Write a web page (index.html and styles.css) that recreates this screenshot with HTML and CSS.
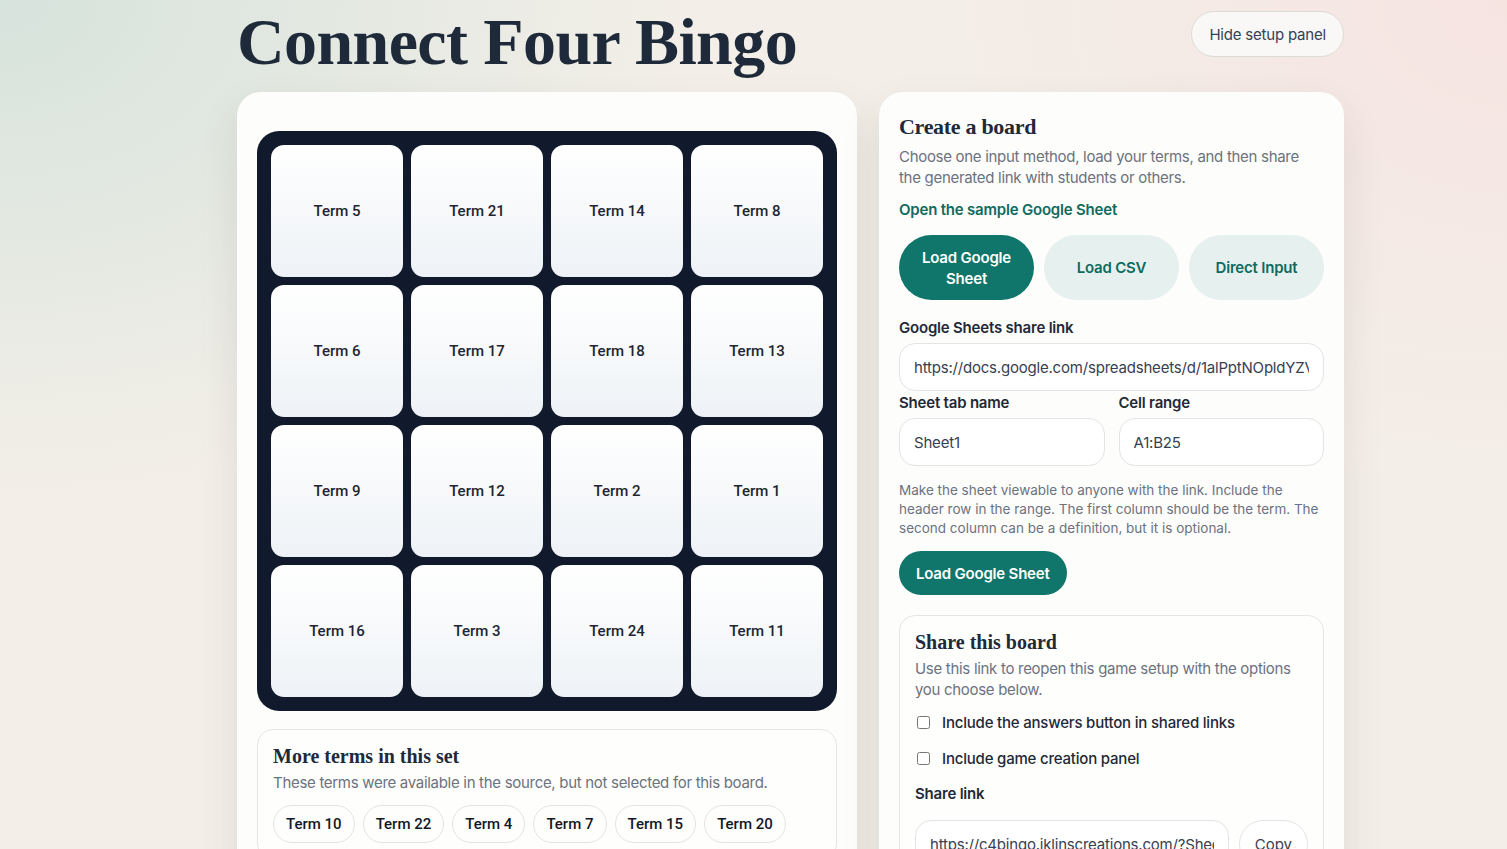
FILE: index.html
```html
<!doctype html>
<html lang="en">
  <head>
    <meta charset="UTF-8" />
    <meta name="viewport" content="width=device-width, initial-scale=1" />
    <title>Connect Four Bingo</title>
    <link rel="stylesheet" href="styles.css">
  </head>
  <body>
    <div class="page">
      <header class="top">
        <h1>Connect Four Bingo</h1>
        <button class="ghost-btn" type="button">Hide setup panel</button>
      </header>

      <main class="layout">
        <section class="card game-card">
          <div class="board">
            <div class="tile">Term 5</div>
            <div class="tile">Term 21</div>
            <div class="tile">Term 14</div>
            <div class="tile">Term 8</div>
            <div class="tile">Term 6</div>
            <div class="tile">Term 17</div>
            <div class="tile">Term 18</div>
            <div class="tile">Term 13</div>
            <div class="tile">Term 9</div>
            <div class="tile">Term 12</div>
            <div class="tile">Term 2</div>
            <div class="tile">Term 1</div>
            <div class="tile">Term 16</div>
            <div class="tile">Term 3</div>
            <div class="tile">Term 24</div>
            <div class="tile">Term 11</div>
          </div>

          <div class="panel extra-terms">
            <h3>More terms in this set</h3>
            <p class="muted">These terms were available in the source, but not selected for this board.</p>
            <div class="chips">
              <span class="chip">Term 10</span>
              <span class="chip">Term 22</span>
              <span class="chip">Term 4</span>
              <span class="chip">Term 7</span>
              <span class="chip">Term 15</span>
              <span class="chip">Term 20</span>
            </div>
          </div>
        </section>

        <aside class="card setup-card">
          <h2>Create a board</h2>
          <p class="muted">Choose one input method, load your terms, and then share the generated link with students or others.</p>
          <a class="sample-link" href="#">Open the sample Google Sheet</a>

          <div class="tabs">
            <button class="tab active" type="button">Load Google Sheet</button>
            <button class="tab" type="button">Load CSV</button>
            <button class="tab" type="button">Direct Input</button>
          </div>

          <label class="field-label" for="sheetUrl">Google Sheets share link</label>
          <input class="field" id="sheetUrl" type="text" value="https://docs.google.com/spreadsheets/d/1alPptNOpldYZVqQ8rT2" />

          <div class="two-col">
            <div>
              <label class="field-label" for="tabName">Sheet tab name</label>
              <input class="field" id="tabName" type="text" value="Sheet1" />
            </div>
            <div>
              <label class="field-label" for="range">Cell range</label>
              <input class="field" id="range" type="text" value="A1:B25" />
            </div>
          </div>

          <p class="hint">Make the sheet viewable to anyone with the link. Include the header row in the range. The first column should be the term. The second column can be a definition, but it is optional.</p>

          <button class="primary-btn" type="button">Load Google Sheet</button>

          <div class="panel share">
            <h3>Share this board</h3>
            <p class="muted">Use this link to reopen this game setup with the options you choose below.</p>
            <label class="check"><input type="checkbox" /> Include the answers button in shared links</label>
            <label class="check"><input type="checkbox" /> Include game creation panel</label>
            <label class="field-label" for="shareLink">Share link</label>
            <div class="share-row">
              <input class="field" id="shareLink" type="text" value="https://c4bingo.iklinscreations.com/?Sheet=1" />
              <button class="copy-btn" type="button">Copy</button>
            </div>
          </div>
        </aside>
      </main>
    </div>
  </body>
</html>
```

FILE: styles.css
```css
* {
  box-sizing: border-box;
}
html,
body {
  margin: 0;
  height: 100%;
  overflow: hidden;
}
body {
  font-family: Inter, "Noto Sans", sans-serif;
  letter-spacing: -0.2px;
  color: #1f2937;
  background:
    radial-gradient(ellipse 700px 500px at 0% 0%, #d6e3dc 0%, rgba(214, 227, 220, 0) 100%),
    radial-gradient(ellipse 600px 500px at 100% 0%, #f6e4e1 0%, rgba(246, 228, 225, 0) 100%),
    #f3efe8;
}
.page {
  width: 1107px;
  margin-left: 237px;
}
.top {
  display: flex;
  justify-content: space-between;
  align-items: flex-start;
  height: 92px;
}
h1 {
  margin: 6px 0 0;
  font-family: "Liberation Serif", serif;
  font-size: 66px;
  font-weight: 700;
  letter-spacing: -0.6px;
  color: #1e2a3a;
  line-height: 72px;
}
.ghost-btn {
  margin-top: 11px;
  height: 46px;
  padding: 0 17px;
  border: 1px solid #dedbd6;
  border-radius: 23px;
  background: #faf8f6;
  font-family: Inter, sans-serif;
  font-size: 15px;
  letter-spacing: -0.2px;
  color: #334155;
}
.layout {
  display: flex;
  gap: 22px;
  align-items: flex-start;
}
.card {
  background: #fdfdfb;
  border-radius: 24px;
  box-shadow: 0 18px 40px rgba(60, 50, 40, 0.1);
}
.game-card {
  width: 620px;
  padding: 39px 20px 20px;
}
.setup-card {
  width: 465px;
  padding: 20px 20px 20px;
}
.board {
  display: grid;
  grid-template-columns: repeat(4, 1fr);
  grid-auto-rows: 132px;
  gap: 8px;
  padding: 14px;
  background: #111a2c;
  border-radius: 22px;
}
.tile {
  display: flex;
  align-items: center;
  justify-content: center;
  border-radius: 13px;
  background: linear-gradient(#ffffff, #eef2f6);
  font-family: Roboto, sans-serif;
  font-size: 15px;
  font-weight: 500;
  letter-spacing: 0;
  color: #1e2533;
}
.panel {
  border: 1px solid #e6e6e3;
  border-radius: 16px;
  background: #fefefd;
  padding: 14px 15px 16px;
}
.extra-terms {
  margin-top: 18px;
}
h2,
h3 {
  font-family: "Liberation Serif", serif;
  font-weight: 700;
  color: #1e2a3a;
  margin: 0;
}
h2 {
  font-size: 22px;
  letter-spacing: -0.3px;
  line-height: 30px;
}
h3 {
  font-size: 20px;
  letter-spacing: 0;
  line-height: 24px;
}
.muted {
  margin: 4px 0 0;
  font-size: 15px;
  line-height: 21px;
  letter-spacing: -0.3px;
  color: #6b7280;
}
.chips {
  display: flex;
  gap: 8px;
  margin-top: 12px;
}
.chip {
  height: 38px;
  padding: 0 12px;
  display: flex;
  align-items: center;
  border: 1px solid #e3e4e6;
  border-radius: 19px;
  font-family: Roboto, sans-serif;
  font-size: 15px;
  font-weight: 500;
  letter-spacing: 0;
  color: #111827;
}
.sample-link {
  display: block;
  margin-top: 12px;
  font-size: 15px;
  font-weight: 600;
  color: #0f6b5e;
  text-decoration: none;
}
.tabs {
  display: flex;
  gap: 10px;
  margin-top: 16px;
}
.tab {
  width: 135px;
  height: 65px;
  padding: 0 16px;
  border: none;
  border-radius: 33px;
  background: #e6f0ee;
  font-family: Inter, sans-serif;
  font-size: 15px;
  font-weight: 600;
  letter-spacing: -0.2px;
  line-height: 21px;
  color: #0f6b5e;
}
.tab.active {
  background: #10756a;
  color: #ffffff;
}
.field-label {
  display: block;
  margin: 18px 0 6px;
  font-size: 15px;
  font-weight: 600;
  color: #1f2937;
}
.field {
  display: block;
  width: 100%;
  height: 48px;
  padding: 0 14px;
  border: 1px solid #e3e4e6;
  border-radius: 16px;
  background: #ffffff;
  font-family: Inter, sans-serif;
  font-size: 15px;
  letter-spacing: -0.2px;
  color: #374151;
}
.two-col {
  display: grid;
  grid-template-columns: 1fr 1fr;
  gap: 14px;
}
.two-col .field-label {
  margin-top: 2px;
}
.hint {
  margin: 15px 0 0;
  font-size: 13.5px;
  line-height: 19px;
  letter-spacing: 0;
  color: #6b7280;
}
.primary-btn {
  margin-top: 13px;
  height: 44px;
  padding: 0 17px;
  border: none;
  border-radius: 22px;
  background: #10756a;
  color: #ffffff;
  font-family: Inter, sans-serif;
  font-size: 15px;
  font-weight: 600;
  letter-spacing: -0.2px;
}
.share {
  margin-top: 20px;
}
.check {
  display: flex;
  align-items: center;
  gap: 12px;
  margin-top: 13px;
  font-size: 15px;
  font-weight: 500;
  color: #1f2937;
}
.check + .check {
  margin-top: 17px;
}
.check input {
  margin: 0 0 0 2px;
  width: 13px;
  height: 13px;
}
.share .field-label {
  margin-top: 16px;
}
.share-row {
  display: flex;
  gap: 10px;
  margin-top: 17px;
}
.copy-btn {
  flex: none;
  height: 48px;
  padding: 0 15px;
  border: 1px solid #e3e4e6;
  border-radius: 24px;
  background: #ffffff;
  font-family: Inter, sans-serif;
  font-size: 15px;
  color: #374151;
}
```
